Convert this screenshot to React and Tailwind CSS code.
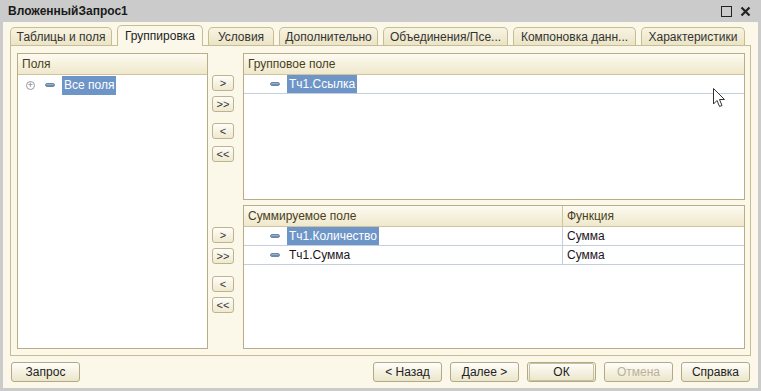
import React from 'react';

const tabs = [
  { label: 'Таблицы и поля', w: 'w-[102px]' },
  { label: 'Группировка', w: 'w-[86px]', active: true },
  { label: 'Условия', w: 'w-[66px]' },
  { label: 'Дополнительно', w: 'w-[99px]' },
  { label: 'Объединения/Псе...', w: 'w-[125px]' },
  { label: 'Компоновка данн...', w: 'w-[123px]' },
  { label: 'Характеристики', w: 'w-[104px]' },
];

function Dash() {
  return (
    <span className="inline-block w-[10px] h-[4px] rounded-[2px] bg-gradient-to-b from-[#a9bfd6] to-[#5f7f9f] border border-[#6d88a6]" />
  );
}

function ArrowBtn({ children, className = '' }) {
  return (
    <div
      className={`w-[22px] h-[16px] flex items-center justify-center rounded-[3px] border border-[#bdb390] bg-gradient-to-b from-[#fefdf8] to-[#efe9cf] text-[11px] leading-none text-[#333] ${className}`}
    >
      {children}
    </div>
  );
}

function Header({ children, className = '' }) {
  return (
    <div
      className={`h-[21px] flex items-center border-b border-[#cfc49d] bg-gradient-to-b from-[#fdfbf2] to-[#efe8cb] text-[#4a3e1c] ${className}`}
    >
      {children}
    </div>
  );
}

function FootBtn({ children, className = '', disabled, def }) {
  return (
    <div
      className={`h-[20px] flex items-center justify-center rounded-[3px] border border-[#b3a985] bg-gradient-to-b from-[#fffefa] to-[#ebe5ca] ${disabled ? 'text-[#b9b29a]' : 'text-[#222]'} ${className}`}
    >
      {def ? (
        <div className="w-full h-full m-[1px] rounded-[2px] border border-[#c9c0a0] flex items-center justify-center">
          {children}
        </div>
      ) : (
        children
      )}
    </div>
  );
}

export default function App() {
  return (
    <div
      className="relative w-[761px] h-[391px] bg-[#cbcbcb] flex flex-col text-[12px] overflow-hidden"
      style={{ fontFamily: '"Liberation Sans", Arial, sans-serif' }}
    >
      {/* title bar */}
      <div className="h-[22px] flex items-center pl-[8px] pr-[10px]">
        <span className="font-bold text-[#1a1a1a]">ВложенныйЗапрос1</span>
        <div className="ml-auto flex items-center gap-[8px]">
          <span className="w-[11px] h-[11px] border-[1.5px] border-[#222]" />
          <svg width="11" height="11" viewBox="0 0 11 11">
            <path d="M1.5 1.5 L9.5 9.5 M9.5 1.5 L1.5 9.5" stroke="#222" strokeWidth="2.2" />
          </svg>
        </div>
      </div>

      {/* body */}
      <div className="flex-1 mx-[3px] mb-[3px] bg-[#fbf8ea] flex flex-col">
        {/* tabs */}
        <div className="relative z-10 h-[24px] pt-[3px] pl-[7px] flex items-end gap-[5px]">
          {tabs.map((t) =>
            t.active ? (
              <div
                key={t.label}
                className={`${t.w} h-[21px] flex items-center justify-center rounded-t-[5px] border border-b-0 border-[#c8bc92] bg-[#fbf8ea] text-[#222]`}
              >
                {t.label}
              </div>
            ) : (
              <div
                key={t.label}
                className={`${t.w} h-[18px] mb-[1px] flex items-center justify-center rounded-t-[5px] border border-b-0 border-[#c8bc92] bg-gradient-to-b from-[#f8f4e2] to-[#ebe4c6] text-[#333]`}
              >
                {t.label}
              </div>
            )
          )}
        </div>

        {/* tab panel */}
        <div className="-mt-px mx-[7px] h-[311px] border border-[#c8bc92] flex pt-[7px] pl-[6px]">
          {/* fields list */}
          <div className="w-[191px] h-[296px] border border-[#b8ad84] bg-white flex flex-col">
            <Header className="pl-[4px]">Поля</Header>
            <div className="h-[20px] flex items-center">
              <span className="ml-[8px] w-[9px] h-[9px] rounded-full border border-[#9a9a9a] flex items-center justify-center text-[9px] leading-none text-[#777]">
                +
              </span>
              <span className="ml-[10px] flex items-center">
                <Dash />
              </span>
              <span className="ml-[7px] h-[19px] px-[2px] flex items-center bg-[#6e95c8] text-white">Все поля</span>
            </div>
          </div>

          {/* arrow buttons */}
          <div className="ml-[4px] w-[22px] flex flex-col">
            <div className="h-[152px] flex flex-col">
              <ArrowBtn className="mt-[22px]">&gt;</ArrowBtn>
              <ArrowBtn className="mt-[5px]">&gt;&gt;</ArrowBtn>
              <ArrowBtn className="mt-[11px]">&lt;</ArrowBtn>
              <ArrowBtn className="mt-[7px]">&lt;&lt;</ArrowBtn>
            </div>
            <div className="flex flex-col">
              <ArrowBtn className="mt-[22px]">&gt;</ArrowBtn>
              <ArrowBtn className="mt-[5px]">&gt;&gt;</ArrowBtn>
              <ArrowBtn className="mt-[12px]">&lt;</ArrowBtn>
              <ArrowBtn className="mt-[5px]">&lt;&lt;</ArrowBtn>
            </div>
          </div>

          {/* right side */}
          <div className="ml-[9px] w-[502px] flex flex-col gap-[5px]">
            <div className="h-[147px] border border-[#b8ad84] bg-white flex flex-col">
              <Header className="pl-[4px]">Групповое поле</Header>
              <div className="h-[19px] flex items-center border-b border-[#c5cfdc]">
                <span className="ml-[26px] flex items-center">
                  <Dash />
                </span>
                <span className="ml-[7px] h-[18px] px-[2px] flex items-center bg-[#6e95c8] text-white">Тч1.Ссылка</span>
              </div>
            </div>

            <div className="h-[144px] border border-[#b8ad84] bg-white flex flex-col">
              <Header>
                <div className="w-[319px] h-full flex items-center pl-[4px] border-r border-[#cfc49d]">Суммируемое поле</div>
                <div className="pl-[4px]">Функция</div>
              </Header>
              {[
                { name: 'Тч1.Количество', sel: true },
                { name: 'Тч1.Сумма' },
              ].map((r) => (
                <div key={r.name} className="h-[19px] flex items-center border-b border-[#c5cfdc] text-[#1c1424]">
                  <div className="w-[319px] h-full flex items-center border-r border-[#c5cfdc]">
                    <span className="ml-[26px] flex items-center">
                      <Dash />
                    </span>
                    <span
                      className={`ml-[7px] h-[18px] px-[2px] flex items-center ${r.sel ? 'bg-[#6e95c8] text-white' : ''}`}
                    >
                      {r.name}
                    </span>
                  </div>
                  <div className="pl-[4px]">Сумма</div>
                </div>
              ))}
            </div>
          </div>
        </div>

        {/* footer buttons */}
        <div className="mt-[6px] flex items-center pl-[8px] pr-[8px]">
          <FootBtn className="w-[69px]">Запрос</FootBtn>
          <div className="ml-auto flex gap-[8px]">
            <FootBtn className="w-[69px]">&lt; Назад</FootBtn>
            <FootBtn className="w-[69px]">Далее &gt;</FootBtn>
            <FootBtn className="w-[69px]" def>
              ОК
            </FootBtn>
            <FootBtn className="w-[69px]" disabled>
              Отмена
            </FootBtn>
            <FootBtn className="w-[69px]">Справка</FootBtn>
          </div>
        </div>
      </div>

      {/* mouse cursor */}
      <svg className="absolute left-[713px] top-[88px]" width="13" height="21" viewBox="0 0 13 21">
        <path d="M0.5 0.5 L0.5 16 L4 12.5 L6.5 18.5 L9 17.5 L6.5 11.5 L11.5 11.5 Z" fill="#fff" stroke="#333" strokeWidth="1" />
      </svg>
    </div>
  );
}
